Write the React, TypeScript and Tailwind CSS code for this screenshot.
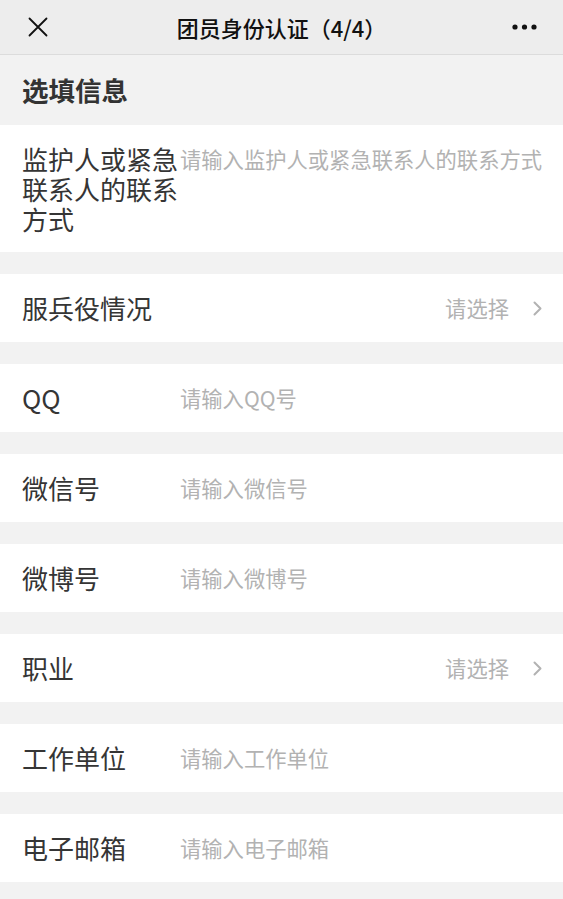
import React from "react";

type Row = { label: string; placeholder?: string; select?: boolean };

const rows: Row[] = [
  { label: "服兵役情况", select: true },
  { label: "QQ", placeholder: "请输入QQ号" },
  { label: "微信号", placeholder: "请输入微信号" },
  { label: "微博号", placeholder: "请输入微博号" },
  { label: "职业", select: true },
  { label: "工作单位", placeholder: "请输入工作单位" },
  { label: "电子邮箱", placeholder: "请输入电子邮箱" },
];

const font = {
  fontFamily: '"Noto Sans CJK SC", "Noto Sans", sans-serif',
};

function Chevron() {
  return (
    <svg width="11" height="15" viewBox="0 0 11 15" fill="none">
      <path d="M2.5 1.5 L8.5 7.5 L2.5 13.5" stroke="#b2b2b2" strokeWidth="2" strokeLinecap="round" strokeLinejoin="round" />
    </svg>
  );
}

export default function App() {
  return (
    <div className="min-h-screen w-full bg-[#f2f2f2]" style={font}>
      <div className="grid h-[55px] grid-cols-[90px_1fr_90px] items-center border-b border-[#dcdcdc] bg-[#ededed]">
        <div className="pl-[28px]">
          <svg width="20" height="20" viewBox="0 0 20 20" fill="none">
            <path d="M1.5 1.5 L18.5 18.5 M18.5 1.5 L1.5 18.5" stroke="#111" strokeWidth="1.8" strokeLinecap="round" />
          </svg>
        </div>
        <div className="text-center text-[22px] font-medium leading-none text-[#111]">
          团员身份认证（4/4）
        </div>
        <div className="flex justify-end pr-[26px]">
          <svg width="25" height="6" viewBox="0 0 25 6">
            <circle cx="3" cy="3" r="2.6" fill="#111" />
            <circle cx="12.5" cy="3" r="2.6" fill="#111" />
            <circle cx="22" cy="3" r="2.6" fill="#111" />
          </svg>
        </div>
      </div>

      <div className="flex h-[70px] items-center px-[22px] text-[26.5px] font-bold text-[#333]">
        选填信息
      </div>

      <div className="flex items-start bg-white pb-[18px] pl-[22px] pr-[18px] pt-[19px]">
        <div className="w-[158px] shrink-0 text-[26px] leading-[30px] text-[#353535]">
          监护人或紧急联系人的联系方式
        </div>
        <div className="min-w-0 flex-1 whitespace-nowrap text-[21.3px] leading-[30px] text-[#b2b2b2]">
          请输入监护人或紧急联系人的联系方式
        </div>
      </div>

      {rows.map((r) => (
        <div key={r.label} className="mt-[22px] flex h-[68px] items-center bg-white pl-[22px] pr-[20px]">
          <div className="w-[158px] shrink-0 text-[26px] leading-[30px] text-[#353535]">{r.label}</div>
          {r.select ? (
            <div className="flex flex-1 items-center justify-end gap-[23px] text-[21.3px] text-[#b2b2b2]">
              <span>请选择</span>
              <Chevron />
            </div>
          ) : (
            <div className="flex-1 text-[21.3px] text-[#b2b2b2]">{r.placeholder}</div>
          )}
        </div>
      ))}
    </div>
  );
}
